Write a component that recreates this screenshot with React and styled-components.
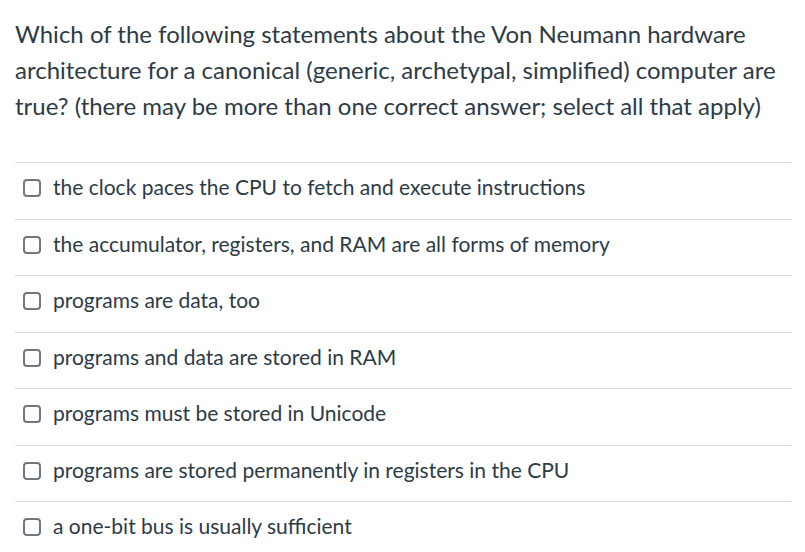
import React from "react";
import styled, { createGlobalStyle } from "styled-components";

const Global = createGlobalStyle`
  html, body { margin: 0; padding: 0; background: #fff; }
  body { font-family: Lato, "Noto Sans", sans-serif; color: #2d3b45; }
`;

const Page = styled.div`
  padding: 16px 14px 0 15px;
`;

const Question = styled.p`
  margin: 0;
  font-size: 24px;
  line-height: 36px;
  color: #2d3b45;
`;

const Answers = styled.div`
  margin-top: 38px;
  display: flex;
  flex-direction: column;
`;

const Row = styled.label`
  box-sizing: border-box;
  display: flex;
  align-items: center;
  gap: 12px;
  height: 56.5px;
  border-top: 1px solid #dcdcdc;
  padding: 0 0 7px 8px;
  font-size: 21px;
  color: #2d3b45;
`;

const Box = styled.span`
  box-sizing: border-box;
  flex: none;
  width: 18px;
  height: 18px;
  border: 2px solid #6f7880;
  border-radius: 4px;
  background: #fff;
  margin-top: 2px;
`;

const Text = styled.span`
  line-height: 28px;
`;

const answers = [
  "the clock paces the CPU to fetch and execute instructions",
  "the accumulator, registers, and RAM are all forms of memory",
  "programs are data, too",
  "programs and data are stored in RAM",
  "programs must be stored in Unicode",
  "programs are stored permanently in registers in the CPU",
  "a one-bit bus is usually sufficient",
];

export default function App() {
  return (
    <Page>
      <Global />
      <Question>
        Which of the following statements about the Von Neumann hardware
        architecture for a canonical (generic, archetypal, simplified) computer
        are true? (there may be more than one correct answer; select all that
        apply)
      </Question>
      <Answers>
        {answers.map((a) => (
          <Row key={a}>
            <Box />
            <Text>{a}</Text>
          </Row>
        ))}
      </Answers>
    </Page>
  );
}
